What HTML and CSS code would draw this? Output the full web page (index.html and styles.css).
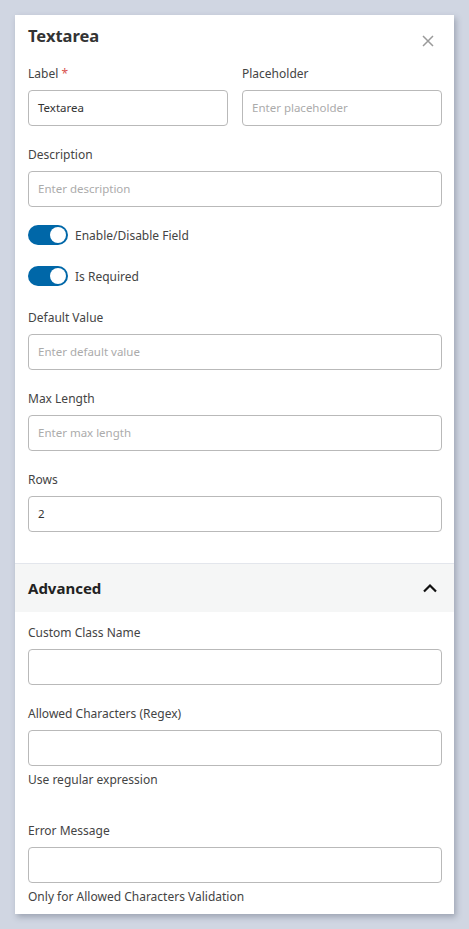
FILE: index.html
```html
<!DOCTYPE html>
<html>
<head>
<meta charset="utf-8">
<link rel="stylesheet" href="styles.css">
</head>
<body>
<div class="card">
  <div class="body">
    <div class="head">
      <h1 class="title">Textarea</h1>
      <svg class="close" width="12" height="12" viewBox="0 0 12 12"><path d="M1 1 L11 11 M11 1 L1 11" stroke="#9a9a9a" stroke-width="1.5" fill="none"/></svg>
    </div>
    <div class="row">
      <div class="field">
        <div class="label">Label <span class="req">*</span></div>
        <div class="input">Textarea</div>
      </div>
      <div class="field">
        <div class="label">Placeholder</div>
        <div class="input ph">Enter placeholder</div>
      </div>
    </div>
    <div class="field tight">
      <div class="label">Description</div>
      <div class="input ph">Enter description</div>
    </div>
    <div class="toggles">
      <div class="toggle-row"><span class="switch"><span class="knob"></span></span><span class="tlabel">Enable/Disable Field</span></div>
      <div class="toggle-row"><span class="switch"><span class="knob"></span></span><span class="tlabel">Is Required</span></div>
    </div>
    <div class="field">
      <div class="label">Default Value</div>
      <div class="input ph">Enter default value</div>
    </div>
    <div class="field">
      <div class="label">Max Length</div>
      <div class="input ph">Enter max length</div>
    </div>
    <div class="field last">
      <div class="label">Rows</div>
      <div class="input">2</div>
    </div>
  </div>
  <div class="adv-head">
    <span class="adv-title">Advanced</span>
    <svg class="chev" width="16" height="10" viewBox="0 0 16 10"><path d="M2 8.5 L8 2.5 L14 8.5" stroke="#111" stroke-width="2.2" fill="none"/></svg>
  </div>
  <div class="adv-body">
    <div class="field">
      <div class="label">Custom Class Name</div>
      <div class="input"></div>
    </div>
    <div class="field has-help">
      <div class="label">Allowed Characters (Regex)</div>
      <div class="input"></div>
      <div class="help">Use regular expression</div>
    </div>
    <div class="field last">
      <div class="label">Error Message</div>
      <div class="input"></div>
      <div class="help">Only for Allowed Characters Validation</div>
    </div>
  </div>
</div>
</body>
</html>
```

FILE: styles.css
```css
html, body { margin: 0; padding: 0; }
body {
  background: #d0d6e2;
  padding: 15px;
  font-family: "Noto Sans", "Open Sans", sans-serif;
  color: #444;
}
.card {
  width: 439px;
  background: #fff;
  box-shadow: 2px 3px 6px rgba(60, 70, 90, 0.35);
}
.body { padding: 9px 12px 31px 13px; }
.head { display: flex; justify-content: space-between; align-items: flex-start; margin-bottom: 18px; }
.title { margin: 0; font-size: 16.5px; line-height: 24px; font-weight: 700; color: #333; }
.close { margin-top: 11px; margin-right: 8px; }
.row { display: grid; grid-template-columns: 1fr 1fr; column-gap: 14px; }
.field { margin-bottom: 21px; }
.field.tight { margin-bottom: 18px; }
.field.has-help { margin-bottom: 35px; }
.field.last { margin-bottom: 0; }
.label { font-size: 12px; line-height: 16px; margin-bottom: 8px; color: #444; }
.req { color: #d9534f; }
.input {
  box-sizing: border-box;
  height: 36px;
  border: 1px solid #b9b9b9;
  border-radius: 4px;
  padding: 0 9px;
  font-size: 11.5px;
  line-height: 34px;
  color: #333;
}
.input.ph { color: #ababab; }
.toggles { display: flex; flex-direction: column; gap: 21px; margin-bottom: 24px; }
.toggle-row { display: flex; align-items: center; height: 20px; }
.switch {
  box-sizing: border-box;
  width: 40px; height: 20px;
  border-radius: 10px;
  background: #0067a8;
  padding: 2px;
  display: flex; justify-content: flex-end;
}
.knob { width: 16px; height: 16px; border-radius: 50%; background: #fff; }
.tlabel { margin-left: 7px; font-size: 12px; color: #444; }
.adv-head {
  border-top: 1px solid #e3e6ec;
  height: 48px;
  background: #f5f6f6;
  display: flex; align-items: center; justify-content: space-between;
  padding: 0 16px 0 13px;
}
.adv-title { font-size: 15px; font-weight: 700; color: #222; }
.adv-body { padding: 13px 12px 9px 13px; }
.help { margin-top: 6px; font-size: 12px; line-height: 16px; color: #444; }
```
